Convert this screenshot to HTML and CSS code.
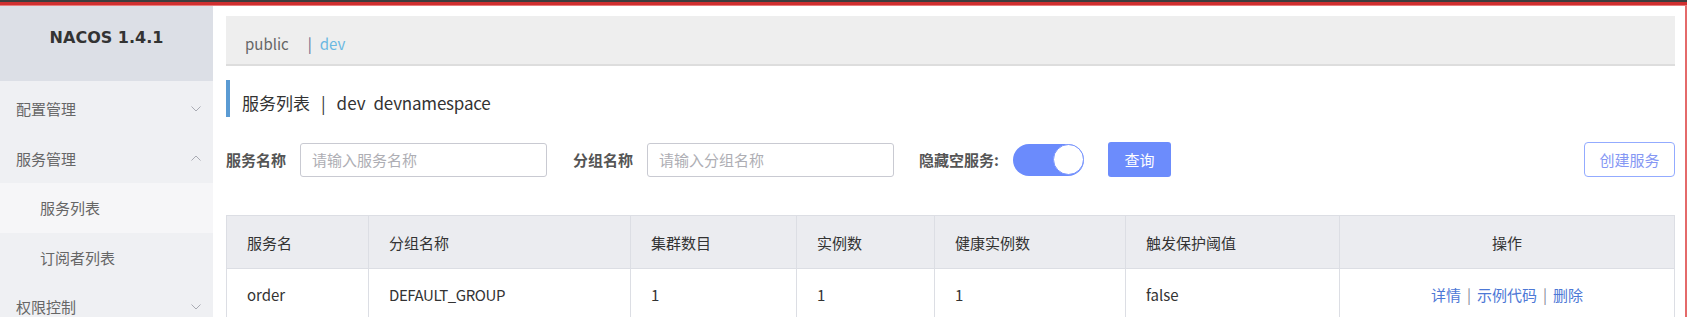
FILE: index.html
```html
<!DOCTYPE html>
<html lang="zh-CN">
<head>
  <meta charset="UTF-8">
  <title>Nacos - 服务列表</title>
  <link rel="stylesheet" href="styles.css">
</head>
<body>
  <div class="topline"></div>
  <div class="page">
    <aside class="sidebar">
      <div class="brand">NACOS 1.4.1</div>
      <ul class="menu">
        <li class="menu-item">配置管理
          <svg class="arrow" width="10" height="6" viewBox="0 0 10 6"><polyline points="0.5,0.5 5,5 9.5,0.5"/></svg>
        </li>
        <li class="menu-item">服务管理
          <svg class="arrow" width="10" height="6" viewBox="0 0 10 6"><polyline points="0.5,5.5 5,1 9.5,5.5"/></svg>
        </li>
        <li class="menu-item sub active">服务列表</li>
        <li class="menu-item sub">订阅者列表</li>
        <li class="menu-item">权限控制
          <svg class="arrow" width="10" height="6" viewBox="0 0 10 6"><polyline points="0.5,0.5 5,5 9.5,0.5"/></svg>
        </li>
      </ul>
    </aside>

    <main class="main">
      <div class="ns-bar">
        <span class="ns">public</span>
        <span class="ns-sep">|</span>
        <span class="ns current">dev</span>
      </div>

      <h1 class="title">服务列表<span class="title-sep">|</span>dev<span class="title-ns">devnamespace</span></h1>

      <div class="search">
        <label class="label">服务名称</label>
        <input class="input first" type="text" placeholder="请输入服务名称">
        <label class="label">分组名称</label>
        <input class="input second" type="text" placeholder="请输入分组名称">
        <label class="label">隐藏空服务:</label>
        <span class="switch"><span class="knob"></span></span>
        <button class="btn-primary">查询</button>
        <button class="btn-create">创建服务</button>
      </div>

      <table class="table">
        <colgroup>
          <col style="width: 142px">
          <col style="width: 262px">
          <col style="width: 166px">
          <col style="width: 138px">
          <col style="width: 191px">
          <col style="width: 214px">
          <col>
        </colgroup>
        <thead>
          <tr>
            <th>服务名</th>
            <th>分组名称</th>
            <th>集群数目</th>
            <th>实例数</th>
            <th>健康实例数</th>
            <th>触发保护阈值</th>
            <th class="center">操作</th>
          </tr>
        </thead>
        <tbody>
          <tr>
            <td>order</td>
            <td class="narrow">DEFAULT_GROUP</td>
            <td>1</td>
            <td>1</td>
            <td>1</td>
            <td>false</td>
            <td class="center">
              <a class="link">详情</a><span class="link-sep">|</span><a class="link">示例代码</a><span class="link-sep">|</span><a class="link">删除</a>
            </td>
          </tr>
        </tbody>
      </table>
    </main>
  </div>
</body>
</html>
```

FILE: styles.css
```css
* {
  box-sizing: border-box;
  margin: 0;
  padding: 0;
}

html, body {
  height: 100%;
  overflow: hidden;
}

body {
  font-family: "Noto Sans CJK SC", "Noto Sans", sans-serif;
  font-size: 15px;
  color: #333;
  background: #fff;
}

.topline {
  height: 6px;
  background: linear-gradient(#3d3d3d 0 2px, #cf2f2f 2px 5px, #e77b7b 5px 6px);
}

.page {
  display: flex;
  height: calc(100% - 6px);
  border-right: 2px solid #e46a6a;
}

/* sidebar */
.sidebar {
  width: 213px;
  flex-shrink: 0;
  background: #eff0f3;
}

.brand {
  height: 75px;
  padding-top: 20px;
  line-height: 24px;
  text-align: center;
  background: #dcdfe6;
  font-family: "DejaVu Sans", sans-serif;
  font-weight: bold;
  font-size: 16px;
  color: #333;
}

.menu {
  list-style: none;
  padding-top: 3px;
}

.menu-item {
  height: 49.5px;
  display: flex;
  align-items: center;
  justify-content: space-between;
  padding: 0 12px 0 16px;
  color: #666;
}

.menu-item.sub {
  padding-left: 40px;
}

.menu-item.active {
  background: #f6f6f8;
}

.arrow {
  fill: none;
  stroke: #a9abb3;
  stroke-width: 1;
}

/* main */
.main {
  flex: 1;
  padding: 10px 10px 0 13px;
  min-width: 0;
}

.ns-bar {
  height: 50px;
  display: flex;
  align-items: center;
  padding: 6px 0 0 19px;
  background: #eeeeee;
  border-bottom: 2px solid #dddddd;
  font-size: 15px;
}

.ns {
  color: #666;
}

.ns-sep {
  color: #5d6688;
  margin: 0 8px 0 19px;
}

.ns.current {
  color: #6ab8e2;
}

.title {
  height: 37px;
  margin-top: 14px;
  padding: 11px 0 0 12px;
  border-left: 4px solid #5b9bd3;
  font-size: 17px;
  line-height: 24px;
  font-weight: normal;
  color: #333;
}

.title-sep {
  margin: 0 11px;
}

.title-ns {
  margin-left: 8px;
  letter-spacing: -0.2px;
}

/* search form */
.search {
  display: flex;
  align-items: center;
  margin-top: 25px;
  height: 35px;
}

.label {
  font-weight: bold;
  color: #555;
  margin-right: 14px;
}

.input {
  width: 247px;
  height: 34px;
  border: 1px solid #c9cad2;
  border-radius: 3px;
  padding: 0 11px;
  font-family: inherit;
  font-size: 15px;
  color: #333;
  outline: none;
}

.input::placeholder {
  color: #aeaeb4;
}

.input.first {
  margin-right: 26px;
}

.input.second {
  margin-right: 25px;
}

.switch {
  width: 71px;
  height: 32px;
  border-radius: 16px;
  background: #6b8bfc;
  display: flex;
  justify-content: flex-end;
  align-items: center;
  margin-right: 24px;
}

.knob {
  width: 31px;
  height: 31px;
  border-radius: 50%;
  background: #fff;
  border: 1.5px solid #7c97fd;
}

.btn-primary {
  width: 63px;
  height: 35px;
  border: none;
  border-radius: 3px;
  background: #6c8cfc;
  color: #fff;
  font-family: inherit;
  font-size: 15px;
  cursor: pointer;
}

.btn-create {
  margin-left: auto;
  width: 91px;
  height: 35px;
  border: 1.5px solid #93abff;
  border-radius: 4px;
  background: #fff;
  color: #8597f4;
  font-family: inherit;
  font-size: 15px;
  cursor: pointer;
}

/* table */
.table {
  width: 100%;
  margin-top: 38px;
  border-collapse: collapse;
  table-layout: fixed;
}

.table th,
.table td {
  border: 1px solid #dcdee4;
  padding: 0 20px;
  text-align: left;
  font-weight: normal;
  color: #333;
}

.table th {
  height: 53px;
  background: #ebecf0;
}

.table td {
  height: 52px;
}

.table td.narrow {
  letter-spacing: -0.4px;
}

.table .center {
  text-align: center;
}

.link {
  color: #4d78d6;
  cursor: pointer;
}

.link-sep {
  color: #8a8c98;
  margin: 0 6px;
}
```
